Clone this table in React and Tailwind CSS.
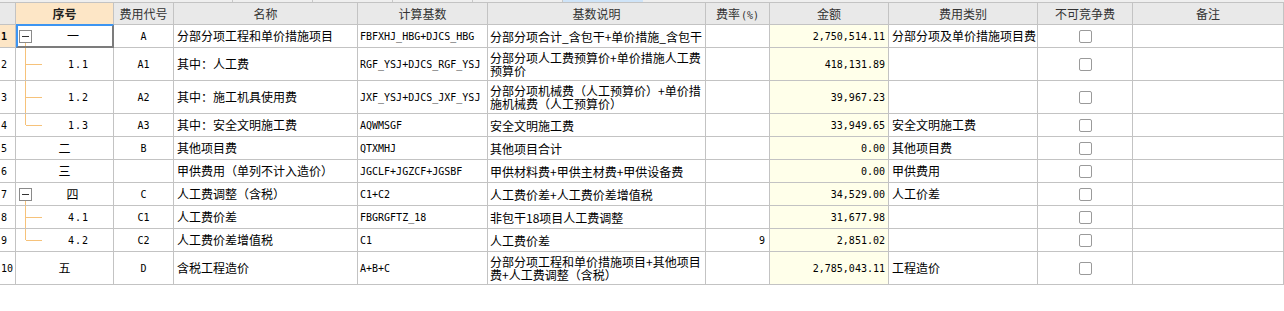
import React from 'react';

const cjk = "font-['Noto_Sans_CJK_SC',sans-serif]";
const mono = "font-['DejaVu_Sans_Mono','Noto_Sans_CJK_SC',monospace]";
const line = '#f6c27a';

const cols = ['w-[16px]', 'w-[98px]', 'w-[60px]', 'w-[184px]', 'w-[130px]', 'w-[218px]', 'w-[64px]', 'w-[119px]', 'w-[149px]', 'w-[95px]', 'flex-1'];

const rows = [
    {n: '1', seq: '一', tree: 'box', code: 'A', name: '分部分项工程和单价措施项目', base: 'FBFXHJ_HBG+DJCS_HBG', desc: '分部分项合计_含包干+单价措施_含包干', rate: '', amt: '2,750,514.11', cat: '分部分项及单价措施项目费', tall: false},
    {n: '2', seq: '1.1', tree: 'mid', code: 'A1', name: '其中：人工费', base: 'RGF_YSJ+DJCS_RGF_YSJ', desc: '分部分项人工费预算价+单价措施人工费预算价', rate: '', amt: '418,131.89', cat: '', tall: true},
    {n: '3', seq: '1.2', tree: 'mid', code: 'A2', name: '其中：施工机具使用费', base: 'JXF_YSJ+DJCS_JXF_YSJ', desc: '分部分项机械费（人工预算价）+单价措施机械费（人工预算价）', rate: '', amt: '39,967.23', cat: '', tall: true},
    {n: '4', seq: '1.3', tree: 'last', code: 'A3', name: '其中：安全文明施工费', base: 'AQWMSGF', desc: '安全文明施工费', rate: '', amt: '33,949.65', cat: '安全文明施工费', tall: false},
    {n: '5', seq: '二', tree: '', code: 'B', name: '其他项目费', base: 'QTXMHJ', desc: '其他项目合计', rate: '', amt: '0.00', cat: '其他项目费', tall: false},
    {n: '6', seq: '三', tree: '', code: '', name: '甲供费用（单列不计入造价）', base: 'JGCLF+JGZCF+JGSBF', desc: '甲供材料费+甲供主材费+甲供设备费', rate: '', amt: '0.00', cat: '甲供费用', tall: false},
    {n: '7', seq: '四', tree: 'box', code: 'C', name: '人工费调整（含税）', base: 'C1+C2', desc: '人工费价差+人工费价差增值税', rate: '', amt: '34,529.00', cat: '人工价差', tall: false},
    {n: '8', seq: '4.1', tree: 'mid', code: 'C1', name: '人工费价差', base: 'FBGRGFTZ_18', desc: '非包干18项目人工费调整', rate: '', amt: '31,677.98', cat: '', tall: false},
    {n: '9', seq: '4.2', tree: 'last', code: 'C2', name: '人工费价差增值税', base: 'C1', desc: '人工费价差', rate: '9', amt: '2,851.02', cat: '', tall: false},
    {n: '10', seq: '五', tree: '', code: 'D', name: '含税工程造价', base: 'A+B+C', desc: '分部分项工程和单价措施项目+其他项目费+人工费调整（含税）', rate: '', amt: '2,785,043.11', cat: '工程造价', tall: true},
];

const cell = 'shrink-0 border-r border-b border-[#c3c3c3] flex items-center overflow-hidden';

function MinusBox({first}) {
    return (
        <div className={'flex flex-col h-full w-[16px] shrink-0 ' + (first ? 'pl-[1px]' : 'pl-[3px]')}>
            <div className="flex-1"></div>
            <div className="w-[13px] h-[13px] border border-[#8a8a8a] bg-white flex items-center justify-center">
                <div className="w-[7px] h-px bg-[#333]"></div>
            </div>
            <div className="flex-1 w-px ml-[6px]" style={{background: line}}></div>
        </div>
    )
}

function Branch({last}) {
    return (
        <svg width="28" className="h-full shrink-0" shapeRendering="crispEdges">
            <line x1="9.5" y1="0" x2="9.5" y2={last ? '50%' : '100%'} stroke={line} strokeWidth="1" />
            <line x1="9.5" y1="50%" x2="26" y2="50%" stroke={line} strokeWidth="1" />
        </svg>
    )
}

function Row({r, i}) {
    const h = r.tall ? 'h-[33px]' : 'h-[23px]';
    const selected = i === 0;
    return (
        <div className={'flex ' + h}>
            <div className={cell + ' ' + cols[0] + ' ' + mono + ' text-[10px] pl-[1px] text-black ' + (selected ? 'bg-[#fde6c6] font-bold' : 'bg-white')}>
                {r.n}
            </div>
            <div className={'shrink-0 flex items-stretch overflow-hidden ' + cols[1] + ' ' + (selected
                ? 'border-l-2 border-t border-r-2 border-b-2 border-l-[#3d95f2] border-t-[#3d95f2] border-r-[#7c7c7c] border-b-[#7c7c7c]'
                : 'border-r border-b border-[#c3c3c3]')}>
                {r.tree === 'box' && <MinusBox first={selected} />}
                {(r.tree === 'mid' || r.tree === 'last') && <Branch last={r.tree === 'last'} />}
                <div className={'flex-1 flex items-center justify-center ' + (/\d/.test(r.seq) ? mono + ' text-[10px] tracking-[1px]' : 'text-[12px]')}>
                    {r.seq}
                </div>
            </div>
            <div className={cell + ' ' + cols[2] + ' justify-center ' + mono + ' text-[10px]'}>{r.code}</div>
            <div className={cell + ' ' + cols[3] + ' pl-[3px] text-[12px]'}>{r.name}</div>
            <div className={cell + ' ' + cols[4] + ' pl-[2px] ' + mono + ' text-[10px]'}>{r.base}</div>
            <div className={cell + ' ' + cols[5] + ' pl-[2px] pr-[2px] text-[12px] leading-[13px]'}>{r.desc}</div>
            <div className={cell + ' ' + cols[6] + ' justify-end pr-[4px] ' + mono + ' text-[10px]'}>{r.rate}</div>
            <div className={cell + ' ' + cols[7] + ' justify-end pr-[3px] bg-[#ffffea] ' + mono + ' text-[10px]'}>{r.amt}</div>
            <div className={cell + ' ' + cols[8] + ' pl-[3px] text-[12px] whitespace-nowrap'}>{r.cat}</div>
            <div className={cell + ' ' + cols[9] + ' justify-center'}>
                <div className="w-[13px] h-[13px] border border-[#9a9a9a] rounded-[2px] bg-white"></div>
            </div>
            <div className={cell + ' ' + cols[10]}></div>
        </div>
    )
}

const heads = ['', '序号', '费用代号', '名称', '计算基数', '基数说明', '费率', '金额', '费用类别', '不可竞争费', '备注'];

function App() {
    return (
        <div className={'w-[1284px] h-[311px] bg-white text-black overflow-hidden ' + cjk}>
            {/* remains of the tab strip above */}
            <div className="flex h-[2px] bg-[#efefef]">
                <div className="w-[233px] border-r border-[#c8c8c8]"></div>
                <div className="w-[80px] border-r border-[#c8c8c8]"></div>
                <div className="w-[80px] border-r border-[#c8c8c8]"></div>
                <div className="w-[80px] border-r border-[#c8c8c8]"></div>
                <div className="w-[90px] border-r border-[#c8c8c8]"></div>
                <div className="w-[80px] bg-[#cfe4f8]"></div>
                <div className="flex-1"></div>
            </div>
            <div className="flex h-[23px] border-t border-[#c3c3c3] text-[12px] text-[#333]">
                {heads.map((t, i) => (
                    <div key={i} className={'shrink-0 border-r border-b flex items-center justify-center overflow-hidden ' + cols[i] + ' ' + (i === 1 ? 'bg-[#fde6c6] font-bold text-[#222] border-b-[#3d95f2] border-r-[#c3c3c3]' : 'bg-[#e9e9e9] border-[#c3c3c3]')}>
                        <span>
                            {t}
                            {i === 6 && <span className={mono + ' text-[10px] ml-[1px]'}>(%)</span>}
                        </span>
                    </div>
                ))}
            </div>
            {rows.map((r, i) => <Row key={i} r={r} i={i} />)}
        </div>
    )
}

export default App
